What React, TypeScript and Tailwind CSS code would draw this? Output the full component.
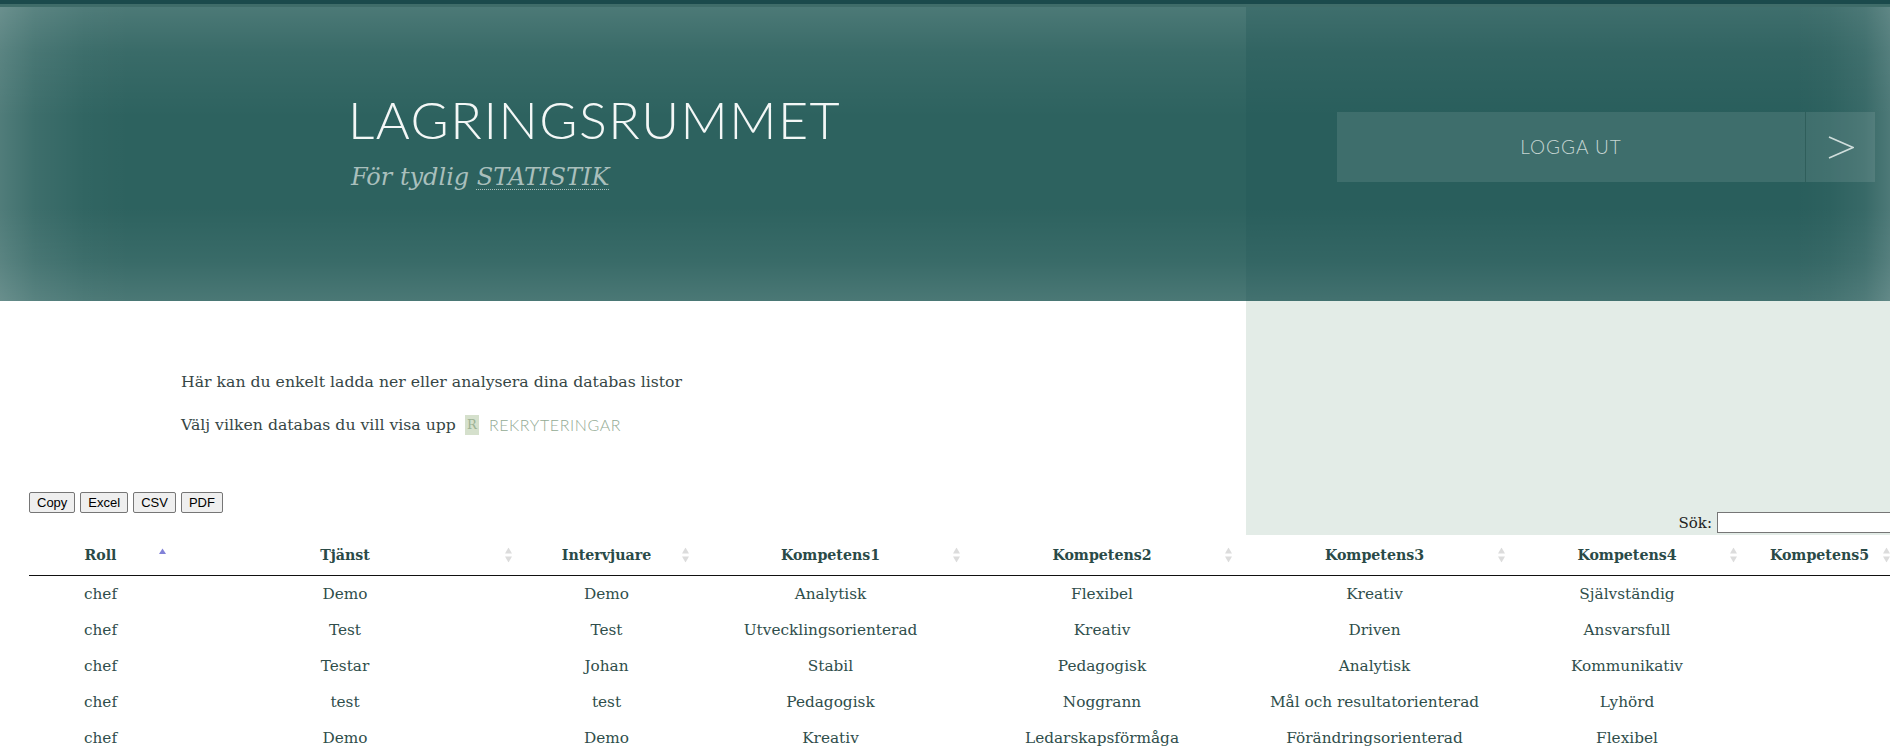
import React from 'react';

type Col = { label: string; width: string; sorted?: boolean };

const COLUMNS: Col[] = [
  { label: 'Roll', width: 'w-[143px]', sorted: true },
  { label: 'Tjänst', width: 'w-[346px]' },
  { label: 'Intervjuare', width: 'w-[177px]' },
  { label: 'Kompetens1', width: 'w-[271px]' },
  { label: 'Kompetens2', width: 'w-[272px]' },
  { label: 'Kompetens3', width: 'w-[273px]' },
  { label: 'Kompetens4', width: 'w-[232px]' },
  { label: 'Kompetens5', width: 'w-[153px]' },
];

const ROWS: string[][] = [
  ['chef', 'Demo', 'Demo', 'Analytisk', 'Flexibel', 'Kreativ', 'Självständig', ''],
  ['chef', 'Test', 'Test', 'Utvecklingsorienterad', 'Kreativ', 'Driven', 'Ansvarsfull', ''],
  ['chef', 'Testar', 'Johan', 'Stabil', 'Pedagogisk', 'Analytisk', 'Kommunikativ', ''],
  ['chef', 'test', 'test', 'Pedagogisk', 'Noggrann', 'Mål och resultatorienterad', 'Lyhörd', ''],
  ['chef', 'Demo', 'Demo', 'Kreativ', 'Ledarskapsförmåga', 'Förändringsorienterad', 'Flexibel', ''],
];

export default function App() {
  return (
    <div className="h-[751px] w-full overflow-hidden bg-white font-['DejaVu_Serif',serif]">
      <div className="h-[4px] bg-[#1b4a4c]" />
      <div className="h-[3px] bg-[#3f6c69]" />

      {/* header */}
      <div className="grid h-[294px] grid-cols-[1246fr_644fr]">
        <div className="bg-[#2d625f] bg-[image:linear-gradient(to_bottom,rgba(255,255,255,0.15),rgba(255,255,255,0.06)_45px,rgba(255,255,255,0)_110px,rgba(255,255,255,0)_200px,rgba(255,255,255,0.06)_255px,rgba(255,255,255,0.14)),linear-gradient(to_right,rgba(255,255,255,0.17),rgba(255,255,255,0.08)_35px,rgba(255,255,255,0.02)_85px,rgba(255,255,255,0)_130px)] pl-[348px] pt-[86px]">
          <h1 className="font-['Lato',sans-serif] text-[52px] leading-[52px] font-light tracking-[1.5px] text-[#f3f7f6]">
            LAGRINGSRUMMET
          </h1>
          <p className="mt-[17px] pl-[3px] text-[24px] leading-[30px] italic text-[#a9bfbc]">
            För tydlig{' '}
            <abbr className="no-underline">
              <span className="underline decoration-dotted decoration-1 underline-offset-[4px]">STATISTIK</span>
            </abbr>
          </p>
        </div>
        <div className="bg-[#295e5c] bg-[image:linear-gradient(to_bottom,rgba(255,255,255,0.1),rgba(255,255,255,0.04)_45px,rgba(255,255,255,0)_110px,rgba(255,255,255,0)_200px,rgba(255,255,255,0.05)_255px,rgba(255,255,255,0.12)),linear-gradient(to_left,rgba(255,255,255,0.17),rgba(255,255,255,0.07)_25px,rgba(255,255,255,0.02)_60px,rgba(255,255,255,0)_95px)] pl-[91px] pr-[15px] pt-[105px]">
          <LogoutButton />
        </div>
      </div>

      {/* intro + sidebar */}
      <div className="grid h-[234px] grid-cols-[1246fr_644fr]">
        <div className="flex flex-col">
          <p className="ml-[181px] mt-[67px] text-[15.7px] leading-[28px] text-[#364645]">
            Här kan du enkelt ladda ner eller analysera dina databas listor
          </p>
          <p className="ml-[181px] mt-[15px] flex items-center text-[15.7px] leading-[28px] text-[#364645]">
            Välj vilken databas du vill visa upp
            <span className="ml-[9px] inline-flex h-[20px] w-[14px] items-center justify-center bg-[#d5e0cc] text-[13px] text-[#9db294]">
              R
            </span>
            <span className="ml-[10px] font-['Lato',sans-serif] text-[16px] font-light tracking-[0.6px] text-[#93ab94]">
              REKRYTERINGAR
            </span>
          </p>
          <div className="ml-[29px] mt-[53px] flex gap-[5px]">
            {['Copy', 'Excel', 'CSV', 'PDF'].map((b) => (
              <button
                key={b}
                type="button"
                className="h-[21px] rounded-[2px] border border-[#767676] bg-[#efefef] px-[7px] font-['Liberation_Sans',sans-serif] text-[13px] leading-none text-black"
              >
                {b}
              </button>
            ))}
          </div>
        </div>
        <div className="flex flex-col justify-end bg-[#e3ece7]">
          <div className="-mr-[6px] flex items-center justify-end gap-[5px] pb-px">
            <label className="text-[15px] text-[#222]">Sök:</label>
            <input
              type="search"
              className="h-[21px] w-[179px] border border-[#767676] bg-white px-1 text-[13px] outline-none"
            />
          </div>
        </div>
      </div>

      {/* table */}
      <div className="ml-[29px]">
        <table className="w-[1867px] table-fixed border-collapse">
          <thead>
            <tr>
              {COLUMNS.map((c) => (
                <th
                  key={c.label}
                  className={`relative h-[40px] border-b border-[#111] px-[18px] py-[10px] text-center text-[14.2px] leading-[20px] font-bold text-[#2a4a47] ${c.width}`}
                >
                  {c.label}
                  <SortIcon sorted={c.sorted} />
                </th>
              ))}
            </tr>
          </thead>
          <tbody>
            {ROWS.map((r, i) => (
              <tr key={i}>
                {r.map((cell, j) => (
                  <td key={j} className="px-[10px] py-[8px] text-center text-[15.3px] leading-[20px] text-[#2f4e4b]">
                    {cell}
                  </td>
                ))}
              </tr>
            ))}
          </tbody>
        </table>
      </div>
    </div>
  );
}

function LogoutButton() {
  return (
    <div className="flex h-[70px] bg-[rgba(255,255,255,0.1)]">
      <button
        type="button"
        className="flex flex-1 items-center justify-center border-r border-[#2f5e5b] font-['Lato',sans-serif] text-[19px] font-light tracking-[1px] text-[#c5d5d2]"
      >
        LOGGA UT
      </button>
      <div className="flex w-[69px] items-center justify-center">
        <svg viewBox="0 0 26 23" className="h-[23px] w-[26px]" fill="none" aria-hidden="true">
          <path d="M1 1l24 10.5L1 22" stroke="#d0dedc" strokeWidth="1.6" />
        </svg>
      </div>
    </div>
  );
}

function SortIcon({ sorted }: { sorted?: boolean }) {
  return (
    <svg
      viewBox="0 0 7 15"
      className="absolute right-[6px] top-1/2 h-[15px] w-[7px] -translate-y-1/2"
      aria-hidden="true"
    >
      {sorted ? (
        <path d="M3.5 1 7 6.5H0z" fill="#8282d8" />
      ) : (
        <>
          <path d="M3.5 0 7 6H0z" fill="#dcdcdc" />
          <path d="M0 9h7l-3.5 6z" fill="#dcdcdc" />
        </>
      )}
    </svg>
  );
}
